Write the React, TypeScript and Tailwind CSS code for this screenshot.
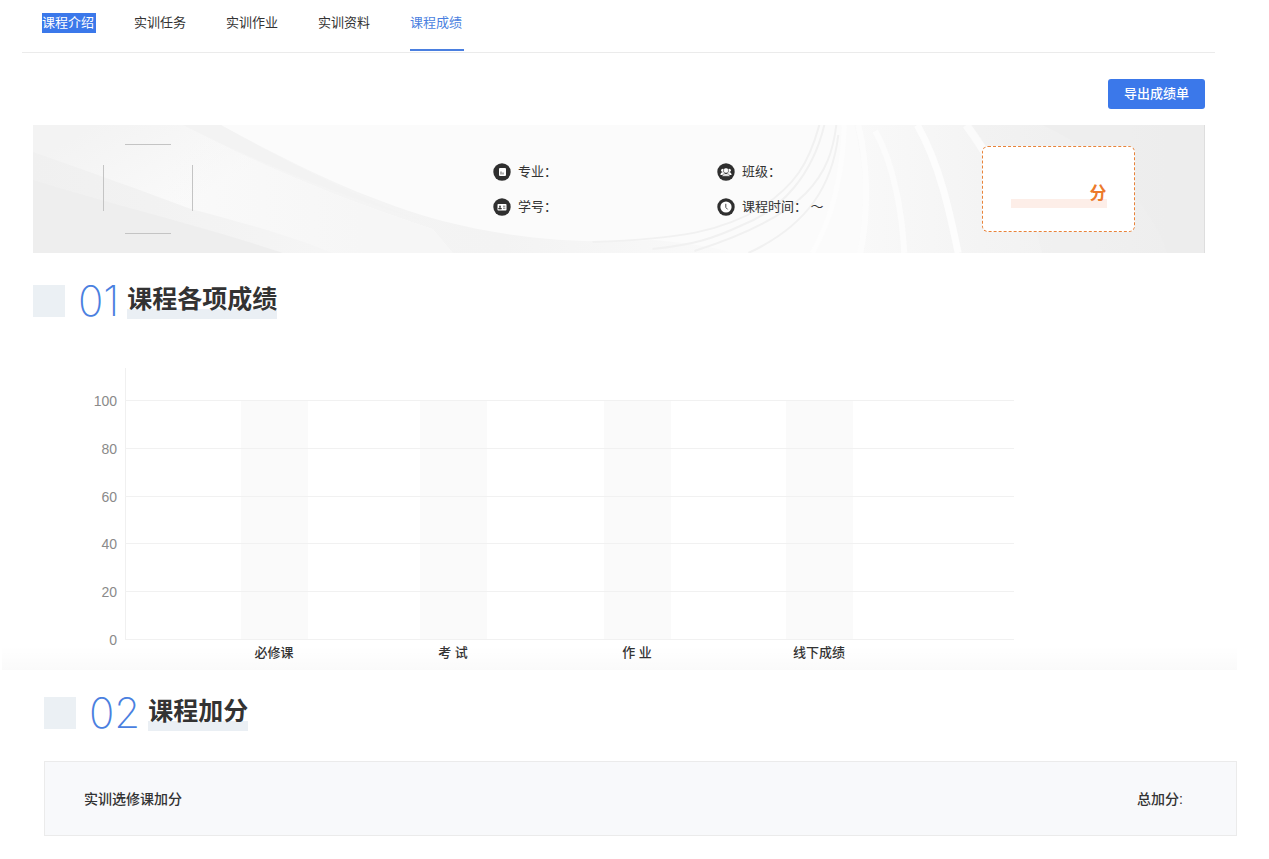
import React from "react";

const tabs = ["课程介绍", "实训任务", "实训作业", "实训资料", "课程成绩"];
const activeTab = "课程成绩";
const selectedTab = "课程介绍";

const ticks = [100, 80, 60, 40, 20, 0];

const bars = [
  { label: "必修课", x: 208 },
  { label: "考 试", x: 387 },
  { label: "作 业", x: 571 },
  { label: "线下成绩", x: 753 },
];

function tabClass(tab: string) {
  if (tab === selectedTab) return "bg-[#3b78ea] text-white";
  if (tab === activeTab) return "text-[#4a7fe0]";
  return "text-[#333]";
}

function TabBar() {
  return (
    <nav className="ml-[22px] mr-[54px] flex gap-[38px] border-b border-[#ebebeb] pl-5">
      {tabs.map((tab) => (
        <a
          key={tab}
          href="#"
          className="flex h-[52px] flex-col justify-between pb-px pt-[13px] text-[13px] leading-5"
        >
          <span className={`pr-0.5 ${tabClass(tab)}`}>{tab}</span>
          {tab === activeTab && <span className="h-[2px] bg-[#4a7fe0]" />}
        </a>
      ))}
    </nav>
  );
}

function BannerBackground() {
  return (
    <svg
      className="absolute inset-0 h-full w-full"
      viewBox="0 0 1172 128"
      preserveAspectRatio="none"
      aria-hidden="true"
    >
      <defs>
        <linearGradient id="rightShade" x1="800" x2="1172" y1="0" y2="0" gradientUnits="userSpaceOnUse">
          <stop offset="0" stopColor="#fafafa" />
          <stop offset="0.4" stopColor="#f4f4f4" />
          <stop offset="1" stopColor="#eeeeee" />
        </linearGradient>
        <linearGradient id="leftShade" x1="0" x2="720" y1="0" y2="0" gradientUnits="userSpaceOnUse">
          <stop offset="0" stopColor="#f1f1f1" />
          <stop offset="0.3" stopColor="#f5f5f5" />
          <stop offset="0.65" stopColor="#f3f3f3" />
          <stop offset="1" stopColor="#fafafa" />
        </linearGradient>
        <linearGradient id="foldShade" x1="60" x2="120" y1="0" y2="100" gradientUnits="userSpaceOnUse">
          <stop offset="0" stopColor="#f3f3f3" />
          <stop offset="1" stopColor="#fafafa" />
        </linearGradient>
        <linearGradient id="foldFade" x1="130" x2="330" y1="0" y2="0" gradientUnits="userSpaceOnUse">
          <stop offset="0" stopColor="#f6f6f6" stopOpacity="0" />
          <stop offset="1" stopColor="#f6f6f6" />
        </linearGradient>
        <linearGradient id="lowFold" x1="0" x2="290" y1="0" y2="0" gradientUnits="userSpaceOnUse">
          <stop offset="0" stopColor="#f0f0f0" />
          <stop offset="1" stopColor="#f5f5f5" />
        </linearGradient>
      </defs>
      <rect width="1172" height="128" fill="#fbfbfb" />
      <path d="M0 0H188C262 40 330 74 410 96C480 114 550 119 620 115C660 118 690 124 700 128H0Z" fill="url(#leftShade)" />
      <path d="M150 0C220 34 290 66 410 102C350 84 270 46 188 0Z" fill="#f3f3f3" />
      <path d="M0 0H150C220 36 290 68 400 104L420 128H0Z" fill="url(#foldShade)" />
      <path d="M130 0H150C220 36 290 68 400 104L420 128H130Z" fill="url(#foldFade)" />
      <path d="M0 27C60 48 110 66 158 84C210 98 250 108 300 128H0Z" fill="url(#lowFold)" />
      <path d="M0 55C80 80 160 98 250 128H0Z" fill="#eeeeee" />
      <path d="M822 0C832 40 834 90 830 128H1172V0Z" fill="url(#rightShade)" />
      <path d="M1010 0C1070 26 1120 80 1135 128H1172V0Z" fill="#ececec" opacity="0.5" />
      <path d="M940 0C960 30 1000 80 1010 128H1172V0Z" fill="#eeeeee" opacity="0.35" />
      <g fill="none" stroke="#f1f1f1" strokeWidth="2">
        <path d="M787 0C776 40 762 60 730 82C690 106 650 114 560 117" />
        <path d="M792 0C780 50 750 84 710 100C680 114 660 120 620 124" />
        <path d="M804 0C798 50 776 90 662 126" />
        <path d="M806 10C800 60 776 100 716 128" />
      </g>
      <g fill="none" stroke="#fdfdfd">
        <path d="M812 0C810 60 796 100 780 128" strokeWidth="5" />
        <path d="M826 0C836 40 836 90 828 128" strokeWidth="6" opacity="0.8" />
        <path d="M843 6C862 40 870 90 872 128" strokeWidth="6" opacity="0.8" />
        <path d="M885 0C908 40 918 90 926 128" strokeWidth="7" />
        <path d="M934 0C946 16 952 26 960 40" strokeWidth="8" opacity="0.8" />
      </g>
    </svg>
  );
}

function AvatarFrame() {
  return (
    <svg width="90" height="90" viewBox="0 0 90 90" className="shrink-0" aria-hidden="true">
      <path d="M22 0.5H68M22 89.5H68M0.5 21V67M89.5 21V67" fill="none" stroke="#c4c4c4" />
    </svg>
  );
}

function MajorIcon() {
  return (
    <>
      <rect x="6" y="5" width="7" height="8" rx="1" fill="#fff" />
      <path d="M8 8.5v3M10 9.5v2" stroke="#333" strokeWidth="0.8" />
    </>
  );
}

function StudentIdIcon() {
  return (
    <>
      <rect x="4.5" y="6" width="9" height="6.5" rx="0.8" fill="#fff" />
      <circle cx="7" cy="8.3" r="0.9" fill="#333" />
      <path d="M5.5 11c0-1.8 3-1.8 3 0zM10 8.2h2.4M10 10.2h2.4" fill="#333" stroke="#333" strokeWidth="0.7" />
    </>
  );
}

function ClassIcon() {
  return (
    <g fill="#fff">
      <circle cx="5.7" cy="7.3" r="1.6" />
      <circle cx="12.3" cy="7.3" r="1.6" />
      <path d="M3.4 12c0-3.6 4-3.6 4.6-2v2zM14.6 12c0-3.6-4-3.6-4.6-2v2z" />
      <rect x="6.6" y="5" width="4.8" height="5" rx="1.6" stroke="#333" strokeWidth="0.6" />
      <path d="M5 13.2c0-3.4 8-3.4 8 0z" stroke="#333" strokeWidth="0.6" />
    </g>
  );
}

function TimeIcon() {
  return (
    <>
      <circle cx="9" cy="9" r="5.6" fill="#fff" />
      <path d="M8.8 5.8v3.6l1.8 2" fill="none" stroke="#333" strokeWidth="0.9" />
    </>
  );
}

function InfoItem({ icon, label }: { icon: React.ReactNode; label: string }) {
  return (
    <div className="flex items-center gap-[7px]">
      <svg width="18" height="18" viewBox="0 0 18 18" className="shrink-0" aria-hidden="true">
        <circle cx="9" cy="9" r="8.7" fill="#2f2f2f" />
        {icon}
      </svg>
      <span className="whitespace-nowrap text-[13px] leading-5 text-[#333]">{label}</span>
    </div>
  );
}

function Banner() {
  return (
    <section className="relative flex h-32 items-center border-r border-[#dedede] pl-[70px] pr-[69px]">
      <BannerBackground />
      <div className="relative flex flex-1 items-center">
        <AvatarFrame />
        <div className="ml-[300px] grid grid-cols-[224px_auto] gap-y-[15px]">
          <InfoItem icon={<MajorIcon />} label="专业：" />
          <InfoItem icon={<ClassIcon />} label="班级：" />
          <InfoItem icon={<StudentIdIcon />} label="学号：" />
          <InfoItem icon={<TimeIcon />} label="课程时间： ～" />
        </div>
        <div className="ml-auto flex h-[86px] w-[153px] items-center justify-center rounded-md border border-dashed border-[#e8833a] bg-white">
          <div className="mt-3 w-24 bg-linear-to-t from-[#fdeee8] from-[9px] to-transparent to-[9px] pb-0.5 text-right text-[17px] font-bold leading-6 text-[#ec7a2c]">
            分
          </div>
        </div>
      </div>
    </section>
  );
}

function SectionTitle({ number, title }: { number: string; title: string }) {
  return (
    <div className="flex items-center">
      <span className="h-8 w-8 bg-[#ebf0f4]" />
      <span className="ml-[13px] font-[Inter] text-[42px] font-extralight leading-10 text-[#4a7fe0]">{number}</span>
      <h2 className="ml-2 bg-linear-to-t from-[#eaeff4] from-[10px] to-transparent to-[10px] pb-1 text-[25px] font-bold leading-8 text-[#333]">
        {title}
      </h2>
    </div>
  );
}

function ScoreChart() {
  return (
    <svg
      viewBox="0 0 990 302"
      className="block w-[990px] max-w-full"
      role="img"
      aria-label="课程各项成绩"
    >
      {bars.map((bar) => (
        <rect key={bar.label} x={bar.x} y="33" width="67" height="239" fill="#fafafa" />
      ))}
      <path d="M92.5 0V272" stroke="#f0f0f0" />
      {ticks.map((tick, i) => {
        const y = 33 + Math.round(i * 47.8);
        return (
          <g key={tick}>
            <path d={`M92 ${y - 0.5}H981`} stroke="#f1f1f1" />
            <text x="84" y={y + 5} textAnchor="end" fontSize="14" fill="#8a8a8a" className="font-['Liberation_Sans']">
              {tick}
            </text>
          </g>
        );
      })}
      {bars.map((bar) => (
        <text
          key={bar.label}
          x={bar.x + 33}
          y="289"
          textAnchor="middle"
          fontSize="13"
          fill="#333"
          className="font-medium"
        >
          {bar.label}
        </text>
      ))}
    </svg>
  );
}

export default function App() {
  return (
    <div className="bg-white font-['Liberation_Sans','Noto_Sans_CJK_SC',sans-serif] text-[#333]">
      <TabBar />

      <main>
        <div className="ml-[33px] mr-16">
          <div className="flex justify-end pb-4 pt-[26px]">
            <button
              type="button"
              className="h-[30px] w-[97px] rounded-[3px] bg-[#3b78ea] text-[13px] font-medium leading-5 text-white"
            >
              导出成绩单
            </button>
          </div>

          <Banner />

          <div className="pt-7">
            <SectionTitle number="01" title="课程各项成绩" />
          </div>
          <div className="pt-[47px]">
            <ScoreChart />
          </div>
        </div>

        {/* soft shadow between the two sections */}
        <div className="-mt-6 ml-0.5 mr-8 h-6 bg-linear-to-b from-transparent to-black/2" />

        <div className="ml-11 mr-8 pb-6 pt-[23px]">
          <SectionTitle number="02" title="课程加分" />
          <div className="mt-7 flex h-[75px] items-center justify-between border border-[#ebebeb] bg-[#f8f9fb] pl-[39px] pr-[53px] text-sm font-medium">
            <span>实训选修课加分</span>
            <span>总加分:</span>
          </div>
        </div>
      </main>
    </div>
  );
}
